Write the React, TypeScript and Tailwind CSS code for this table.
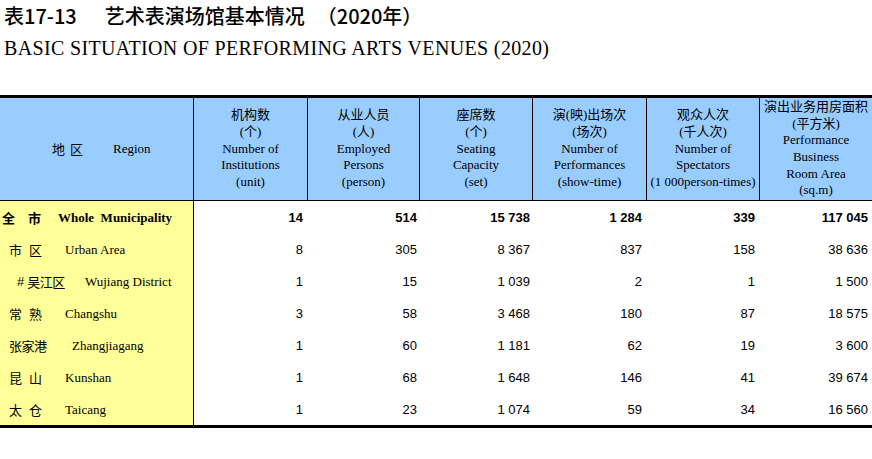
import React from "react";

const cjk = "font-['Noto_Sans_CJK_SC',sans-serif]";

type HeadProps = { lines: string[] };
function Head({ lines }: HeadProps) {
  return (
    <div className="h-[103px] border-b border-l border-black bg-[#99ccff] flex flex-col items-center justify-center text-center text-[13px] leading-[16.7px] text-black whitespace-nowrap overflow-hidden font-['Liberation_Serif','Noto_Sans_CJK_SC',serif]">
      {lines.map((l, i) => (
        <div key={i}>{l}</div>
      ))}
    </div>
  );
}

const rows: { region: React.ReactNode; vals: string[]; bold?: boolean }[] = [
  {
    bold: true,
    vals: ["14", "514", "15 738", "1 284", "339", "117 045"],
    region: (
      <>
        <span className={`w-[58px] shrink-0 pl-[2px] tracking-[13px] font-bold text-[13px] ${cjk}`}>全市</span>
        <span className="font-bold font-['Liberation_Serif',serif] text-[13px] whitespace-pre">Whole  Municipality</span>
      </>
    ),
  },
  {
    vals: ["8", "305", "8 367", "837", "158", "38 636"],
    region: (
      <>
        <span className={`w-[65px] shrink-0 pl-[9px] tracking-[7px] text-[13px] ${cjk}`}>市区</span>
        <span className="font-['Liberation_Serif',serif] text-[13px]">Urban Area</span>
      </>
    ),
  },
  {
    vals: ["1", "15", "1 039", "2", "1", "1 500"],
    region: (
      <>
        <span className="w-[85px] shrink-0 pl-[17px] text-[13px] flex items-center">
          <span className="font-['Liberation_Sans',sans-serif]">#</span>
          <span className={`ml-[3px] tracking-[-0.5px] ${cjk}`}>吴江区</span>
        </span>
        <span className="font-['Liberation_Serif',serif] text-[13px]">Wujiang District</span>
      </>
    ),
  },
  {
    vals: ["3", "58", "3 468", "180", "87", "18 575"],
    region: (
      <>
        <span className={`w-[65px] shrink-0 pl-[9px] tracking-[7px] text-[13px] ${cjk}`}>常熟</span>
        <span className="font-['Liberation_Serif',serif] text-[13px]">Changshu</span>
      </>
    ),
  },
  {
    vals: ["1", "60", "1 181", "62", "19", "3 600"],
    region: (
      <>
        <span className={`w-[72px] shrink-0 pl-[9px] tracking-[-0.5px] text-[13px] ${cjk}`}>张家港</span>
        <span className="font-['Liberation_Serif',serif] text-[13px]">Zhangjiagang</span>
      </>
    ),
  },
  {
    vals: ["1", "68", "1 648", "146", "41", "39 674"],
    region: (
      <>
        <span className={`w-[65px] shrink-0 pl-[9px] tracking-[7px] text-[13px] ${cjk}`}>昆山</span>
        <span className="font-['Liberation_Serif',serif] text-[13px]">Kunshan</span>
      </>
    ),
  },
  {
    vals: ["1", "23", "1 074", "59", "34", "16 560"],
    region: (
      <>
        <span className={`w-[65px] shrink-0 pl-[9px] tracking-[7px] text-[13px] ${cjk}`}>太仓</span>
        <span className="font-['Liberation_Serif',serif] text-[13px]">Taicang</span>
      </>
    ),
  },
];

const padR = ["pr-[4px]", "pr-[2px]", "pr-[2px]", "pr-[4px]", "pr-[4px]", "pr-[4px]"];

export default function App() {
  return (
    <div className="w-[872px] h-[459px] bg-white overflow-hidden text-black">
      <div className={`h-[33px] pt-[3px] pl-[4px] text-[20px] leading-[26px] font-medium whitespace-nowrap ${cjk}`}>
        <span>表17-13</span>
        <span className="ml-[28px]">艺术表演场馆基本情况</span>
        <span className="ml-[12px]">（2020年）</span>
      </div>
      <div className="h-[30px] pl-[4px] text-[20px] leading-[30px] tracking-[0.35px] whitespace-nowrap font-['Liberation_Serif',serif]">
        BASIC SITUATION OF PERFORMING ARTS VENUES (2020)
      </div>
      <div className="mt-[32px] border-t-[3px] border-b-[3px] border-black grid grid-cols-[193px_114px_112px_113px_114px_113px_113px]">
        <div className="h-[103px] border-b border-black bg-[#99ccff] flex items-center text-[13px] whitespace-nowrap">
          <span className={`w-[113px] shrink-0 pl-[52px] tracking-[5px] ${cjk}`}>地区</span>
          <span className="font-['Liberation_Serif',serif]">Region</span>
        </div>
        <Head lines={["机构数", "(个)", "Number of", "Institutions", "(unit)"]} />
        <Head lines={["从业人员", "(人)", "Employed", "Persons", "(person)"]} />
        <Head lines={["座席数", "(个)", "Seating", "Capacity", "(set)"]} />
        <Head lines={["演(映)出场次", "(场次)", "Number of", "Performances", "(show-time)"]} />
        <Head lines={["观众人次", "(千人次)", "Number of", "Spectators", "(1 000person-times)"]} />
        <Head lines={["演出业务用房面积", "(平方米)", "Performance", "Business", "Room Area", "(sq.m)"]} />
        {rows.map((r, ri) => (
          <React.Fragment key={ri}>
            <div className="h-[32px] pt-[2px] bg-[#ffff99] flex items-center whitespace-nowrap">{r.region}</div>
            {r.vals.map((v, ci) => (
              <div
                key={ci}
                className={`h-[32px] pt-[2px] flex items-center justify-end text-[13px] font-['Liberation_Sans',sans-serif] whitespace-pre ${padR[ci]} ${ci === 0 ? "border-l border-black" : ""} ${r.bold ? "font-bold" : ""}`}
              >
                {v}
              </div>
            ))}
          </React.Fragment>
        ))}
      </div>
    </div>
  );
}
